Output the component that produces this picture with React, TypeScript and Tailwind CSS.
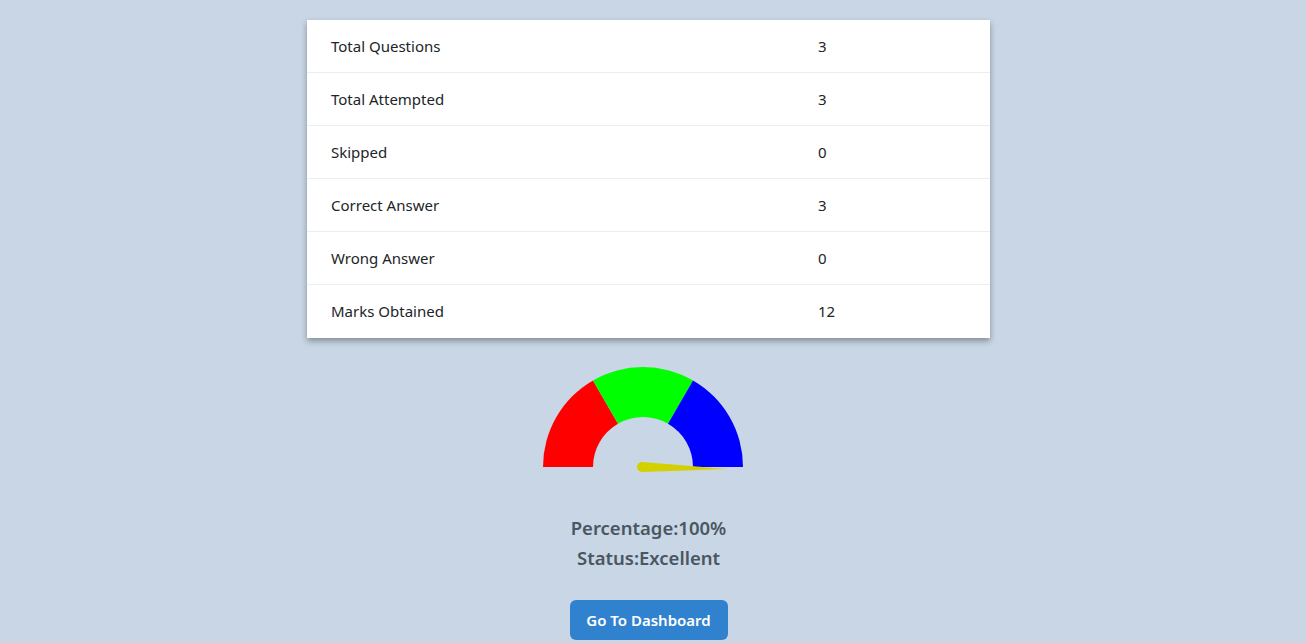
import React from "react";

const rows: [string, string][] = [
  ["Total Questions", "3"],
  ["Total Attempted", "3"],
  ["Skipped", "0"],
  ["Correct Answer", "3"],
  ["Wrong Answer", "0"],
  ["Marks Obtained", "12"],
];

function Gauge() {
  const cx = 100;
  const cy = 102;
  const R = 100;
  const r = 50;
  const pt = (rad: number, a: number) => {
    const t = (a * Math.PI) / 180;
    return [cx + rad * Math.cos(t), cy - rad * Math.sin(t)];
  };
  const seg = (a1: number, a2: number) => {
    const [x1, y1] = pt(R, a1);
    const [x2, y2] = pt(R, a2);
    const [x3, y3] = pt(r, a2);
    const [x4, y4] = pt(r, a1);
    return `M${x1} ${y1} A${R} ${R} 0 0 1 ${x2} ${y2} L${x3} ${y3} A${r} ${r} 0 0 0 ${x4} ${y4} Z`;
  };
  return (
    <svg width="211" height="110" viewBox="0 0 211 110">
      <path d={seg(180, 120)} fill="#ff0000" />
      <path d={seg(120, 60)} fill="#00ff00" />
      <path d={seg(60, 0)} fill="#0000ff" />
      <path
        d={`M${cx - 1} ${cy - 5} L${cx + 84} ${cy + 2} L${cx - 1} ${cy + 5} A5 5 0 0 1 ${cx - 1} ${cy - 5} Z`}
        fill="#d4d000"
      />
    </svg>
  );
}

export default function App() {
  return (
    <div className="min-h-[643px] w-full bg-[#c8d6e5]">
      <div
        className="w-[1297px] flex flex-col items-center pt-[20px]"
        style={{ fontFamily: '"Noto Sans", "Open Sans", sans-serif' }}
      >
        <div className="w-[683px] bg-white shadow-[0_3px_6px_rgba(0,0,0,0.35)]">
          {rows.map(([k, v], i) => (
            <div
              key={k}
              className={`flex h-[53px] items-center text-[15px] text-[#212529] ${
                i < rows.length - 1 ? "border-b border-[#e9eef3]" : ""
              }`}
            >
              <div className="w-[487px] pl-[24px]">{k}</div>
              <div className="pl-[24px]">{v}</div>
            </div>
          ))}
        </div>
        <div className="mt-[27px]">
          <Gauge />
        </div>
        <div className="mt-[38px] flex flex-col items-center text-[18.5px] leading-[30px] font-semibold text-[#4a5662]">
          <div>Percentage:100%</div>
          <div>Status:Excellent</div>
        </div>
        <button className="mt-[27px] h-[40px] w-[158px] rounded-[6px] bg-[#3182ce] text-[15px] font-semibold text-white">
          Go To Dashboard
        </button>
      </div>
    </div>
  );
}
